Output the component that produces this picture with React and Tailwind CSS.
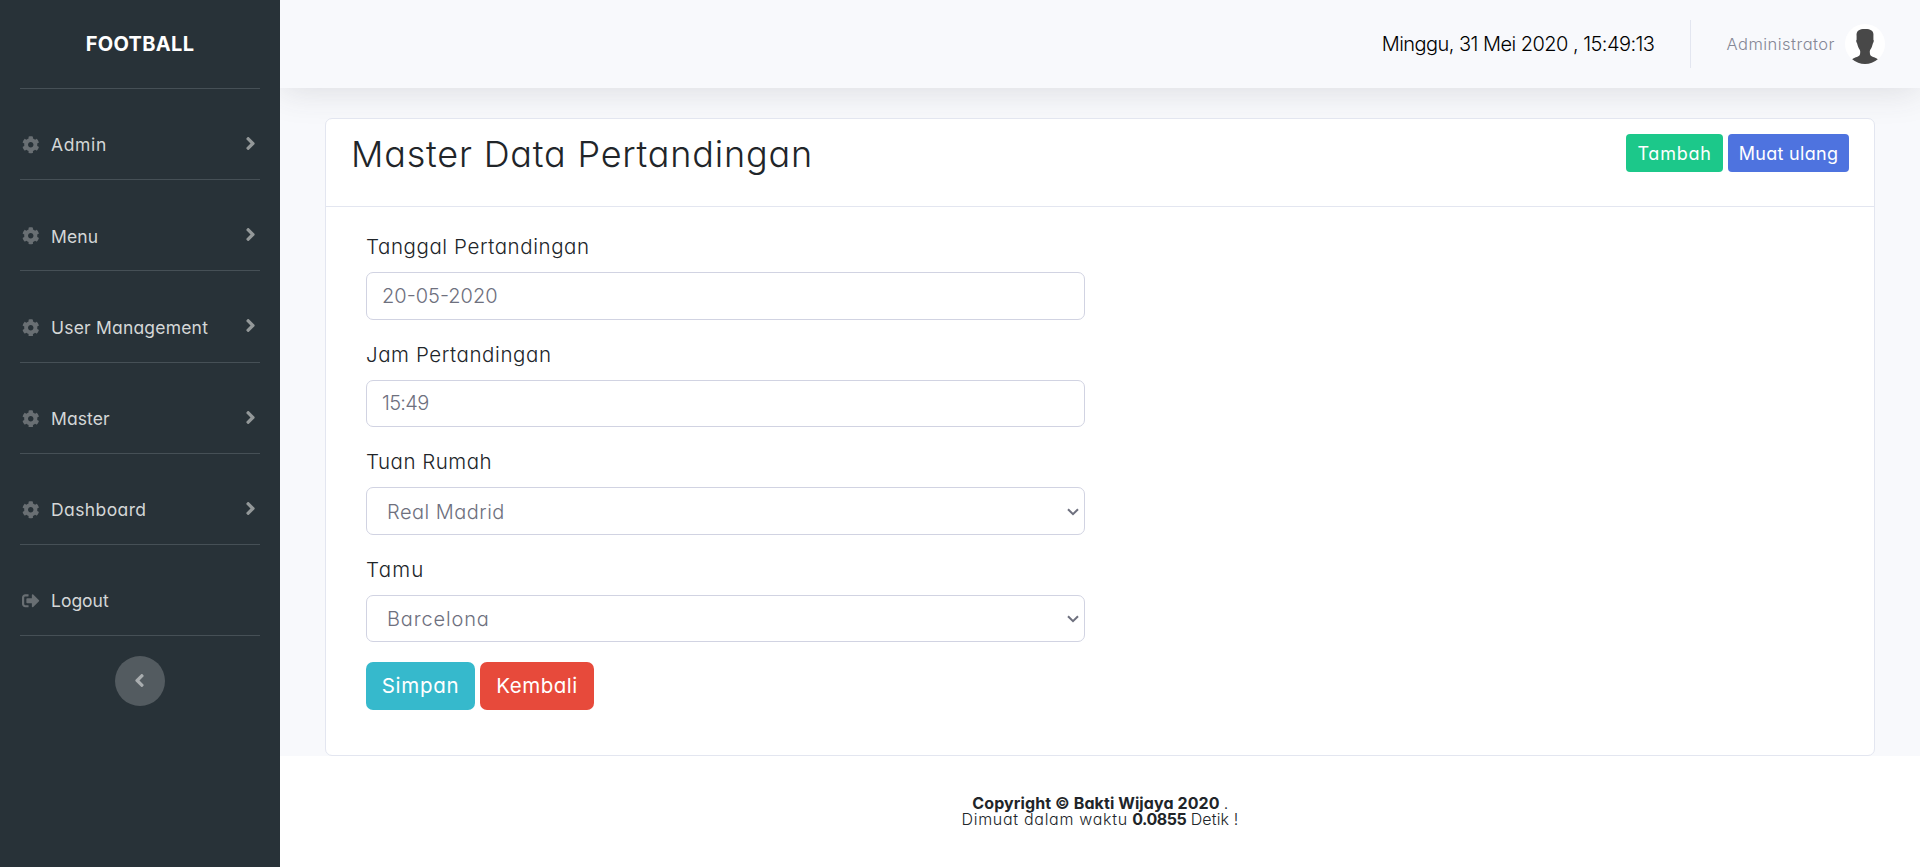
import { FaAngleLeft, FaAngleRight, FaCog, FaSignOutAlt } from "react-icons/fa";

const navItems = [
  { label: "Admin", tracking: "tracking-[0.65px]" },
  { label: "Menu", tracking: "tracking-[0.1px]" },
  { label: "User Management", tracking: "tracking-[0.2px]" },
  { label: "Master", tracking: "tracking-[0.1px]" },
  { label: "Dashboard", tracking: "tracking-[0.4px]" },
  { label: "Logout", tracking: "tracking-[0px]" },
];

function NavItem({ label, tracking }) {
  const logout = label === "Logout";
  const Icon = logout ? FaSignOutAlt : FaCog;
  return (
    <li className="mx-5 h-[91.2px] border-b border-[#465056] pt-[43px]">
      <a className="flex h-[26px] items-center">
        <Icon size={17.5} className="ml-[2px] shrink-0 text-[#696f73]" />
        <span className={`mt-px ml-[11.5px] grow text-[17.5px] text-[#d4d7d7] ${tracking}`}>{label}</span>
        {!logout && <FaAngleRight size={21} className="-mt-[3px] -mr-px shrink-0 text-[#939899]" />}
      </a>
    </li>
  );
}

function Sidebar() {
  return (
    <nav className="flex w-[280px] shrink-0 flex-col bg-[#283238]">
      <div className="flex h-[88px] items-center justify-center text-[20px] font-bold tracking-[0.31px] text-white">
        FOOTBALL
      </div>
      <div className="mx-5 h-px shrink-0 bg-[#465056]" />
      <ul>
        {navItems.map((item) => (
          <NavItem key={item.label} {...item} />
        ))}
      </ul>
      <button className="mt-5 flex size-[50px] items-center justify-center self-center rounded-full bg-[#535b60]">
        <FaAngleLeft size={21} className="-mt-0.5 mr-0.5 text-[#a9adaf]" />
      </button>
    </nav>
  );
}

function Avatar() {
  return (
    <svg viewBox="0 0 40 40" className="size-10">
      <circle cx="20" cy="20" r="20" fill="#fff" />
      <path
        d="M20 5c3 0 5.2.4 6.9 1.7 1.3 1 1.8 3 1.5 5.3v3.800c.6.2.5 2-.3 3.200-.5 1-.6 2.300-1.300 3.900-.7 1.600-1.900 2.900-2 4.300 0 1.900.2 3.200.8 4.200 1.400 1.700 5.600 2 7.200 3.900A20 20 0 0 1 20 40 20 20 0 0 1 7.200 35.300c1.600-1.900 5.800-2.200 7.200-3.900.7-1 .9-2.300.8-4.200-.1-1.400-1.300-2.700-2-4.300-.7-1.600-.8-2.900-1.300-3.900-.8-1.200-.9-3-.3-3.200V12c-.3-2.300.2-4.300 1.500-5.300C14.800 5.400 17 5 20 5z"
        fill="#484848"
      />
    </svg>
  );
}

function Topbar() {
  return (
    <header className="flex h-[88px] shrink-0 items-center justify-end bg-[#f8f9fc] pr-[35px] shadow-[0_3px_35px_0_rgba(58,59,69,0.15)]">
      <span className="text-[20px] font-[350] tracking-[-0.54px] text-black">
        Minggu, 31 Mei 2020 , 15:49:13
      </span>
      <div className="ml-[36px] h-[48px] w-px bg-[#e3e6f0]" />
      <span className="ml-[35px] text-[16.5px] font-[350] tracking-[0.48px] text-[#858796]">
        Administrator
      </span>
      <div className="ml-[10px]">
        <Avatar />
      </div>
    </header>
  );
}

function Field({ label, labelTracking, value, valueTracking, select }) {
  return (
    <div className="mb-5">
      <label className={`mb-2.5 block h-[30px] text-[20.5px] leading-[30px] font-[350] text-[#212529] ${labelTracking}`}>
        {label}
      </label>
      <div
        className={`flex h-[47.5px] items-center justify-between rounded-[7px] border border-[#d1d3e2] bg-white text-[20px] font-[350] text-[#6e707e] ${select ? "pr-[5px] pl-5" : "px-[15px]"}`}
      >
        <span className={`${select ? "mt-[1.5px]" : ""} ${valueTracking}`}>{value}</span>
        {select && (
          <svg viewBox="0 0 12 8" className="mt-0.5 h-2 w-3" fill="none" stroke="#6e707e" strokeWidth="2">
            <path d="M1 1.2 6 6.2l5-5" />
          </svg>
        )}
      </div>
    </div>
  );
}

export default function App() {
  return (
    <div className="flex h-[867px] w-[1920px] overflow-hidden font-['Inter',sans-serif] whitespace-nowrap text-[#212529] [font-feature-settings:'cv11']">
      <Sidebar />
      <div className="flex grow flex-col overflow-hidden bg-white">
        <div className="flex h-[756px] flex-col bg-[#f8f9fc]">
          <Topbar />
          <main className="mx-[45px] mt-[30px] grow rounded-[7px] border border-[#e3e6f0] bg-white">
            <div className="flex h-[88px] items-start justify-between border-b border-[#e3e6f0] pr-[25px] pl-6 pt-[15px]">
              <h1 className="-mt-px ml-px text-[36px] leading-[42px] font-light tracking-[0.8px]">
                Master Data Pertandingan
              </h1>
              <div className="flex gap-[5px] text-[18px] text-white">
                <button className="h-[38px] w-[97px] rounded-[4px] bg-[#1cc88a] tracking-[0.75px]">Tambah</button>
                <button className="h-[38px] w-[121px] rounded-[4px] bg-[#4e73df] tracking-[0.3px]">Muat ulang</button>
              </div>
            </div>
            <form className="ml-10 w-[719px] pt-[25px]">
              <Field
                label="Tanggal Pertandingan"
                labelTracking="tracking-[0.58px]"
                value="20-05-2020"
                valueTracking="tracking-[0px]"
              />
              <Field
                label="Jam Pertandingan"
                labelTracking="tracking-[0.58px]"
                value="15:49"
                valueTracking="tracking-[-0.7px]"
              />
              <Field
                label="Tuan Rumah"
                labelTracking="tracking-[0.5px]"
                value="Real Madrid"
                valueTracking="tracking-[0.48px]"
                select
              />
              <Field
                label="Tamu"
                labelTracking="tracking-[1.2px]"
                value="Barcelona"
                valueTracking="tracking-[0.86px]"
                select
              />
              <div className="flex gap-[5px] text-[20.5px] text-white">
                <button type="button" className="h-[48px] w-[109px] rounded-[7px] bg-[#36b9cc] tracking-[0.7px]">
                  Simpan
                </button>
                <button type="button" className="h-[48px] w-[114px] rounded-[7px] bg-[#e74a3b] tracking-[0.5px]">
                  Kembali
                </button>
              </div>
            </form>
          </main>
        </div>
        <footer className="flex flex-col items-center pt-[39px] text-[16px] leading-4 font-light">
          <div className="tracking-[-0.5px]">
            <b className="font-bold tracking-[0.1px]">Copyright © Bakti Wijaya 2020</b> .
          </div>
          <div className="font-[350]">
            <span className="tracking-[0.7px]">Dimuat dalam waktu</span>{" "}
            <b className="font-bold tracking-[-0.5px]">0.0855</b>{" "}
            <span className="tracking-[0.15px]">Detik !</span>
          </div>
        </footer>
      </div>
    </div>
  );
}
